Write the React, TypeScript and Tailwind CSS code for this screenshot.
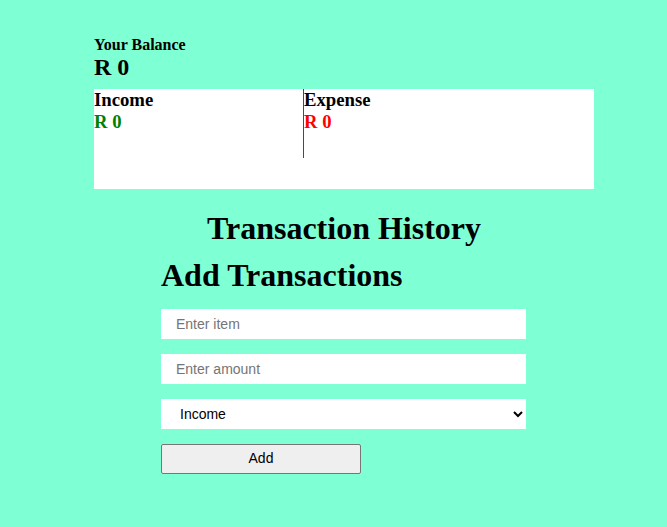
export default function App() {
  return (
    <div className="min-h-screen bg-[#7fffd4] pt-[36px] pl-[94px] font-['Liberation_Serif',serif] text-black">
      <div className="w-[500px]">
        <h4 className="text-[16px] font-bold leading-[1.15]">Your Balance</h4>
        <h2 className="text-[24px] font-bold leading-[1.15]">R 0</h2>

        <div className="mt-[7px] flex h-[100px] bg-white">
          <div className="w-[209px]">
            <h3 className="text-[18.72px] font-bold leading-[1.15]">Income</h3>
            <p className="text-[18.72px] font-bold leading-[1.15] text-[#008000]">R 0</p>
          </div>
          <div className="h-[69px] flex-1 border-l border-[#008000]">
            <h3 className="text-[18.72px] font-bold leading-[1.15]">Expense</h3>
            <p className="text-[18.72px] font-bold leading-[1.15] text-[#ff0000]">R 0</p>
          </div>
        </div>

        <h1 className="mt-[21px] text-center text-[32px] font-bold leading-[1.15]">Transaction History</h1>

        <div className="ml-[67px] mt-[10px] w-[365px]">
          <h1 className="text-[32px] font-bold leading-[1.15]">Add Transactions</h1>

          <form className="mt-[15px] flex flex-col gap-[15px] font-['Liberation_Sans',Arial,sans-serif] text-[14px]">
            <input
              type="text"
              placeholder="Enter item"
              className="h-[30px] w-full bg-white pl-[15px] placeholder:text-[#757575] outline-none"
            />
            <input
              type="number"
              placeholder="Enter amount"
              className="h-[30px] w-full bg-white pl-[15px] placeholder:text-[#757575] outline-none"
            />
            <select className="h-[30px] w-full bg-white pl-[15px] text-black outline-none">
              <option>Income</option>
              <option>Expense</option>
            </select>
            <button
              type="button"
              className="h-[30px] w-[200px] rounded-[2px] border border-[#767676] bg-[#efefef] text-black"
            >
              Add
            </button>
          </form>
        </div>
      </div>
    </div>
  )
}
